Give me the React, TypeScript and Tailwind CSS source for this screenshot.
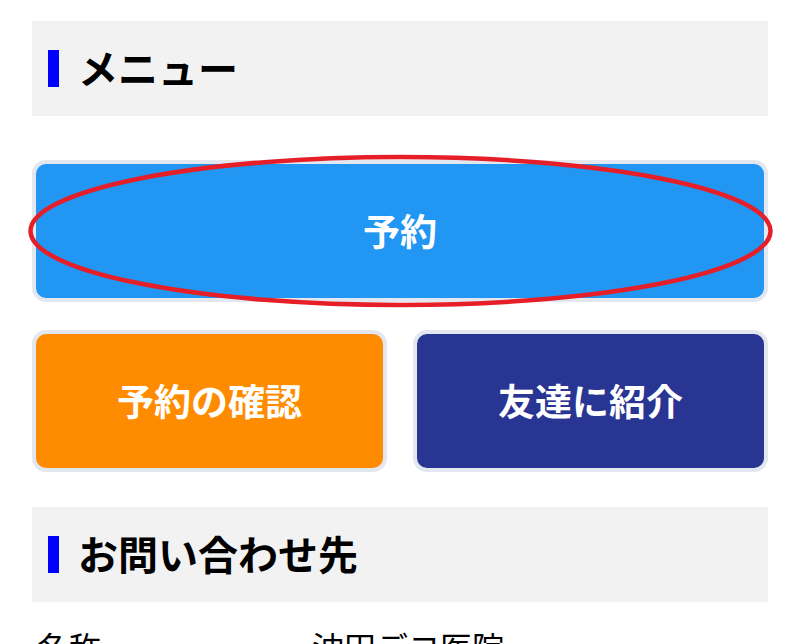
import React from 'react';

const font = { fontFamily: '"Noto Sans CJK JP", "Noto Sans", sans-serif' };

const SectionHeader = ({ title }: { title: string }) => (
  <div className="flex h-[95px] items-center bg-[#f2f2f2] pl-4">
    <span className="h-[37px] w-[11px] bg-[#0000ff]" />
    <h2 className="mb-[4px] ml-[19px] text-[40px] font-bold leading-none text-black">{title}</h2>
  </div>
);

const MenuButton = ({ label, color }: { label: string; color: string }) => (
  <button
    className={`flex w-full items-center justify-center rounded-[14px] border-4 border-[#e3e7ef] text-[37px] font-bold text-white ${color}`}
  >
    {label}
  </button>
);

export default function App() {
  return (
    <div className="min-h-screen bg-white px-8 pt-[21px]" style={font}>
      <SectionHeader title="メニュー" />

      <div className="relative mt-[44px] flex h-[142px]">
        <MenuButton label="予約" color="bg-[#2196f3]" />
        {/* annotation ring */}
        <svg
          className="pointer-events-none absolute -left-[10px] -top-[10px]"
          width="756"
          height="162"
          viewBox="0 0 756 162"
        >
          <ellipse cx="378.5" cy="81" rx="370" ry="74" fill="none" stroke="#e61e28" strokeWidth="4.5" />
        </svg>
      </div>

      <div className="mt-[28px] grid h-[142px] grid-cols-2 gap-[26px]">
        <MenuButton label="予約の確認" color="bg-[#ff8c00]" />
        <MenuButton label="友達に紹介" color="bg-[#283593]" />
      </div>

      <div className="mt-[35px]">
        <SectionHeader title="お問い合わせ先" />
      </div>

      <dl className="mt-[28px] flex text-[32px] leading-none text-black">
        <dt className="w-[280px] pl-[5px]">名称</dt>
        <dd>沖田デコ医院</dd>
      </dl>
    </div>
  );
}
